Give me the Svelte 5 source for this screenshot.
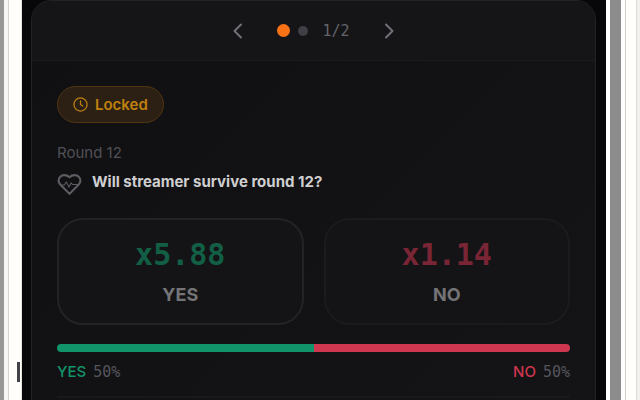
<script>
	let page = $state(0);
	let pages = [0, 1];

	let options = [
		{ label: 'YES', odds: '5.88', share: 50, kind: 'yes' },
		{ label: 'NO', odds: '1.14', share: 50, kind: 'no' }
	];
</script>

<div class="page">
	<div class="gutter left"><span class="caret"></span></div>

	<main class="screen">
		<section class="card">
			<nav class="pager">
				<button class="arrow" aria-label="Previous" onclick={() => (page = 0)}>
					<svg viewBox="0 0 18 18" width="18" height="18"><path d="M12 2.5 5.5 9l6.5 6.5" /></svg>
				</button>
				<div class="dots">
					{#each pages as p}
						<span class="dot" class:active={p === page}></span>
					{/each}
					<span class="count">{page + 1}/{pages.length}</span>
				</div>
				<button class="arrow" aria-label="Next" onclick={() => (page = 1)}>
					<svg viewBox="0 0 18 18" width="18" height="18"><path d="M6 2.5 12.5 9 6 15.5" /></svg>
				</button>
			</nav>

			<div class="body">
				<span class="badge">
					<svg viewBox="0 0 24 24" width="15" height="15">
						<circle cx="12" cy="12" r="10.500" />
						<path d="M12 6v6l3.500 2.500" />
					</svg>
					Locked
				</span>

				<p class="round">Round 12</p>
				<div class="question">
					<svg viewBox="0 0 24 24" width="25" height="25">
						<path d="M19 14c1.490-1.460 3.500-3.210 3.500-5.500A5.500 5.500 0 0 0 17 3c-1.760 0-3.500.5-5 2-1.500-1.500-3.240-2-5-2a5.500 5.500 0 0 0-5.500 5.500c0 2.300 2 4.050 3.500 5.500l7 7Z" />
						<path class="pulse" d="M3.500 12.500H7l2-3 2.500 5 2-4 1.500 1.500h6" />
					</svg>
					<h1>Will streamer survive round 12?</h1>
				</div>

				<div class="options">
					{#each options as option}
						<button class="option {option.kind}" disabled>
							<span class="odds">x{option.odds}</span>
							<span class="name">{option.label}</span>
						</button>
					{/each}
				</div>

				<div class="bar">
					{#each options as option}
						<span class={option.kind} style="width: {option.share}%"></span>
					{/each}
				</div>
				<div class="legend">
					{#each options as option}
						<span class={option.kind}>{option.label} <b>{option.share}%</b></span>
					{/each}
				</div>
				<hr />
			</div>
		</section>
	</main>

	<div class="gutter right"><span class="track"></span><span class="paper"></span></div>
</div>

<style>
	:global(body) {
		margin: 0;
		background: #fffefa;
	}

	.page {
		display: flex;
		height: 100vh;
		overflow: hidden;
		font-family: Inter, sans-serif;
		font-size: 15px;
	}

	.gutter {
		box-sizing: border-box;
		display: flex;
		flex: none;
	}

	.left {
		width: 22px;
		align-items: flex-end;
		justify-content: flex-end;
		padding: 0 2px 18px 0;
		background: linear-gradient(90deg, #979797 4px, #f6f6f5 4px 8px, #d5d6cd 8px 9px, #fffefa 9px 21px, #e4e4df 21px);
	}

	.caret {
		width: 3px;
		height: 20px;
		background: #424246;
	}

	.right {
		width: 34px;
		padding-left: 4px;
		background: #ffffff;
	}

	.track {
		width: 11px;
		margin-right: 4px;
		background: #8c8c8c;
	}

	.paper {
		flex: 1;
		border-left: 1px solid #d0d0cc;
		background: linear-gradient(90deg, #fffefa 10px, #dddcd7 10px 11px, #f2f1ed 11px);
	}

	.screen {
		flex: 1;
		min-width: 0;
		padding: 0 10px 0 9px;
		background: #070709;
	}

	.card {
		border: 1px solid #222224;
		border-radius: 20px;
		background: linear-gradient(135deg, #101012, #141416);
		overflow: hidden;
	}

	.pager {
		display: flex;
		align-items: center;
		justify-content: center;
		gap: 21px;
		height: 59px;
		border-bottom: 1px solid #1b1b1d;
		background: #151517;
	}

	button {
		padding: 0;
		font-family: inherit;
		color: inherit;
	}

	svg {
		display: block;
		flex: none;
		fill: none;
		stroke: currentColor;
		stroke-width: 2;
		stroke-linecap: round;
		stroke-linejoin: round;
	}

	.arrow {
		display: flex;
		align-items: center;
		justify-content: center;
		width: 36px;
		height: 36px;
		border: 0;
		background: none;
		color: #71717a;
		cursor: pointer;
	}

	.dots {
		display: flex;
		align-items: center;
		gap: 8px;
	}

	.dot {
		width: 10px;
		height: 10px;
		border-radius: 50%;
		background: #3f3f46;
	}

	.dot.active {
		width: 13px;
		height: 13px;
		background: #f97316;
	}

	.count {
		margin-left: 6px;
		font-family: 'DejaVu Sans Mono', monospace;
		line-height: 20px;
		color: #63636b;
	}

	.body {
		padding: 25px 25px 40px;
	}

	.badge {
		box-sizing: border-box;
		display: inline-flex;
		align-items: center;
		gap: 7px;
		height: 37px;
		padding: 0 15px;
		border: 1px solid #4f3511;
		border-radius: 19px;
		background: #2c2014;
		font-weight: 600;
		color: #c0800f;
		vertical-align: top;
	}

	.round {
		margin: 19px 0 0;
		font-size: 15px;
		line-height: 22px;
		color: #504f56;
	}

	.question {
		display: flex;
		gap: 10px;
		margin-top: 8px;
		color: #5c5c63;
	}

	.pulse {
		stroke-width: 1;
	}

	h1 {
		margin: 0;
		font-size: 15px;
		line-height: 20px;
		font-weight: 700;
		color: #cfcfd1;
	}

	.options {
		display: grid;
		grid-template-columns: 1fr 1fr;
		gap: 20px;
		margin-top: 21px;
	}

	.option {
		display: flex;
		flex-direction: column;
		align-items: center;
		gap: 9px;
		padding: 16px 0;
		border: 2px solid #1b1b1d;
		border-radius: 26px;
		background: #141416;
	}

	.option.yes {
		border-color: #232325;
	}

	.odds {
		font-family: 'DejaVu Sans Mono', monospace;
		font-size: 30px;
		line-height: 38px;
		font-weight: 700;
	}

	.option.yes .odds {
		color: #125f46;
	}

	.option.no .odds {
		color: #7a2535;
	}

	.name {
		font-size: 18px;
		line-height: 24px;
		font-weight: 700;
		color: #747477;
	}

	.bar {
		display: flex;
		height: 8px;
		margin-top: 19px;
		border-radius: 4px;
		overflow: hidden;
	}

	.bar .yes {
		background: #12946a;
	}

	.bar .no {
		background: #cf3650;
	}

	.legend {
		display: flex;
		justify-content: space-between;
		margin-top: 9px;
		line-height: 22px;
		font-weight: 500;
	}

	.legend .yes {
		color: #12946a;
	}

	.legend .no {
		color: #cf3650;
	}

	.legend b {
		margin-left: 3px;
		font-family: 'DejaVu Sans Mono', monospace;
		font-weight: 400;
		color: #55555c;
	}

	hr {
		margin: 13px 0 0;
		border: 0;
		border-top: 2px solid #19191b;
	}
</style>
